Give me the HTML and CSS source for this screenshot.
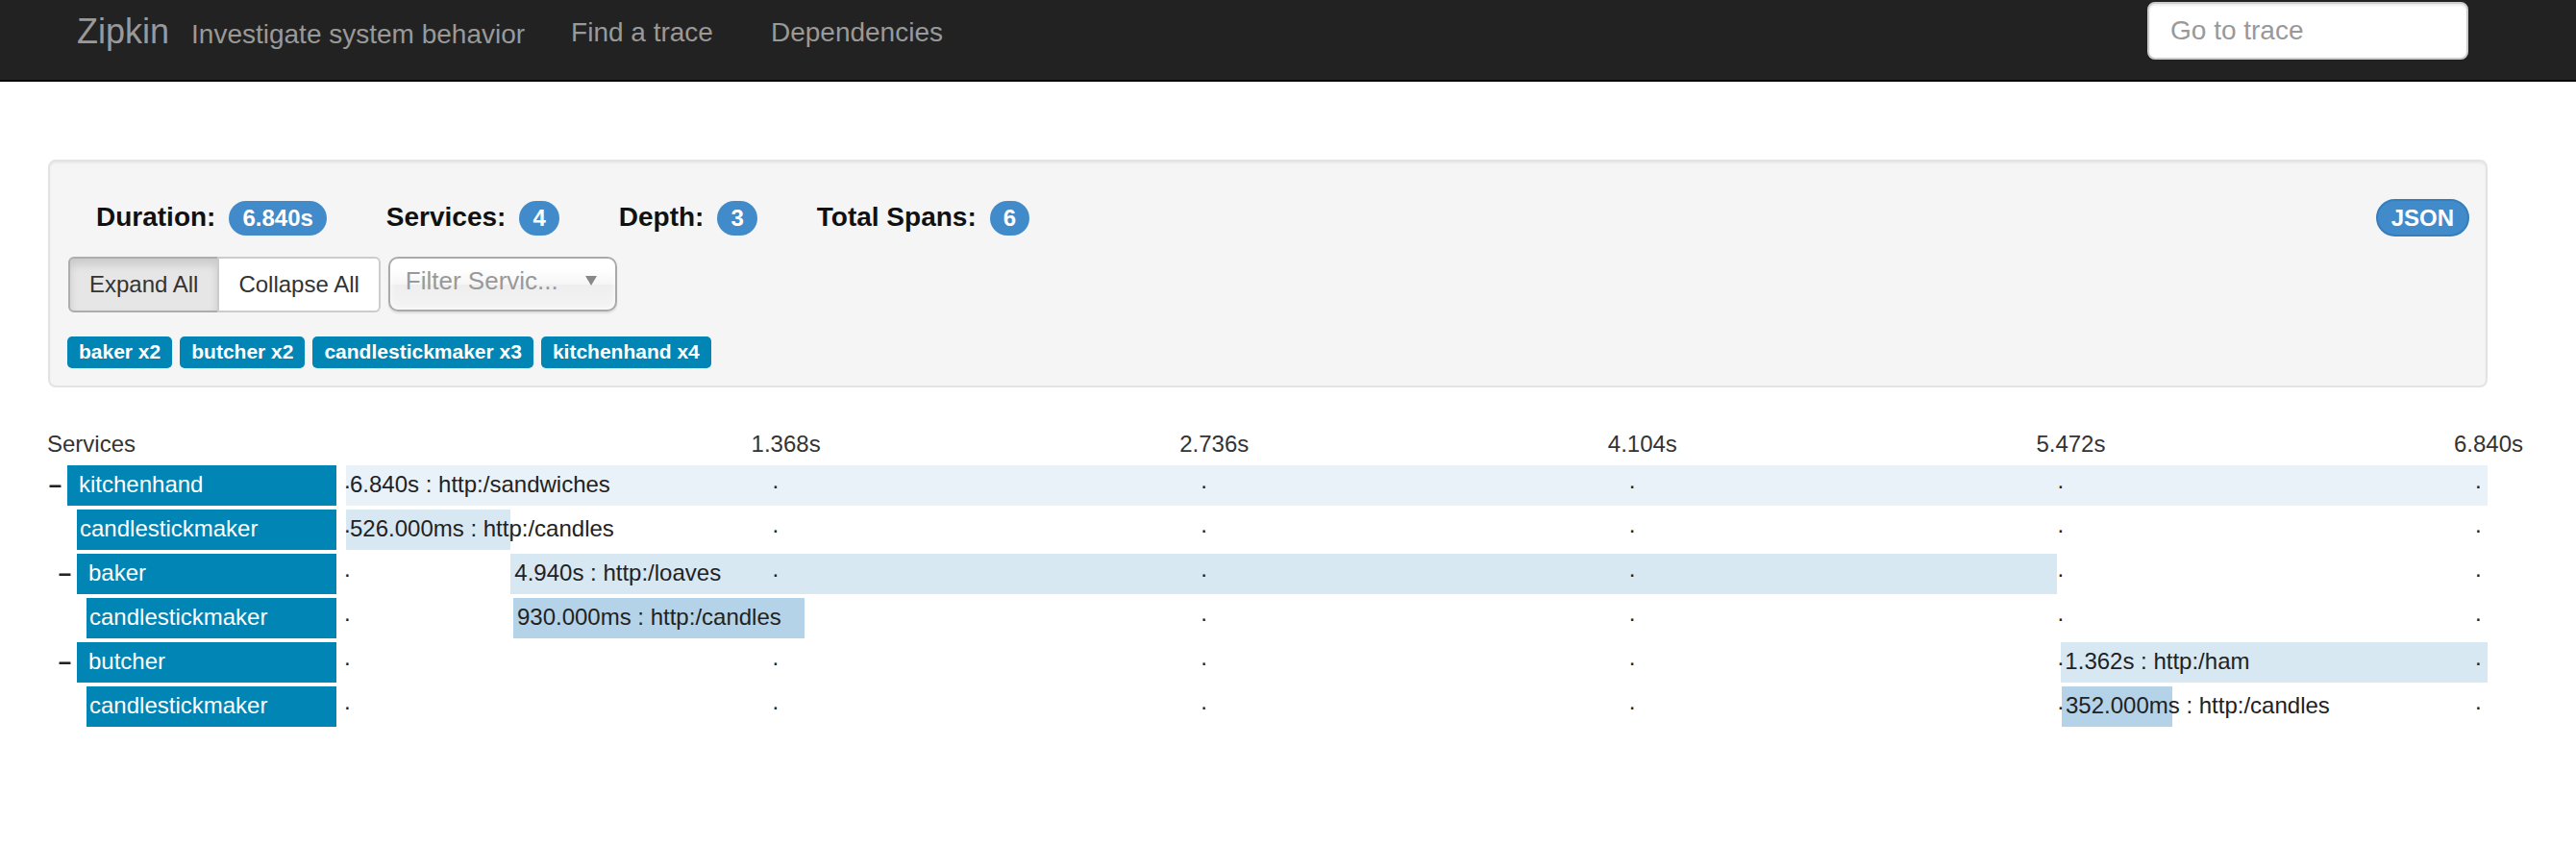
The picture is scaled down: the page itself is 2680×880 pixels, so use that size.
FILE: index.html
```html
<!DOCTYPE html>
<html lang="en">
<head>
<meta charset="utf-8">
<title>Zipkin</title>
<link rel="stylesheet" href="styles.css">
</head>
<body>
<nav class="navbar">
  <a class="brand" href="#">Zipkin</a>
  <span class="tagline">Investigate system behavior</span>
  <ul class="nav">
    <li><a class="nav-link" href="#">Find a trace</a></li>
    <li><a class="nav-link" href="#">Dependencies</a></li>
  </ul>
  <input class="goto" type="text" placeholder="Go to trace">
</nav>

<main class="page">
  <section class="well">
    <div class="stats">
      <div class="stat"><span class="stat-label">Duration:</span><span class="badge">6.840s</span></div>
      <div class="stat"><span class="stat-label">Services:</span><span class="badge">4</span></div>
      <div class="stat"><span class="stat-label">Depth:</span><span class="badge">3</span></div>
      <div class="stat"><span class="stat-label">Total Spans:</span><span class="badge">6</span></div>
      <button class="json" type="button">JSON</button>
    </div>
    <div class="controls">
      <div class="btn-group">
        <button class="btn active" type="button">Expand All</button>
        <button class="btn" type="button">Collapse All</button>
      </div>
      <div class="chosen">
        <span class="placeholder">Filter Servic...</span>
        <span class="arrow"></span>
      </div>
    </div>
    <div class="tags">
      <span class="tag">baker x2</span>
      <span class="tag">butcher x2</span>
      <span class="tag">candlestickmaker x3</span>
      <span class="tag">kitchenhand x4</span>
    </div>
  </section>

  <section class="trace">
    <div class="trace-head">
      <div class="svc-col head-title">Services</div>
      <div class="track">
        <span class="tick-label" style="left:20%">1.368s</span>
        <span class="tick-label" style="left:40%">2.736s</span>
        <span class="tick-label" style="left:60%">4.104s</span>
        <span class="tick-label" style="left:80%">5.472s</span>
        <span class="tick-label end" style="left:100%">6.840s</span>
      </div>
    </div>

    <div class="span-row">
      <div class="svc-col svc-cell d0"><span class="toggle">–</span><span class="svc-name">kitchenhand</span></div>
      <div class="track">
        <div class="bar bar-light" style="left:0%;width:100%">6.840s : http:/sandwiches</div>
        <span class="marker" style="left:0%">.</span>
        <span class="marker" style="left:20%">.</span>
        <span class="marker" style="left:40%">.</span>
        <span class="marker" style="left:60%">.</span>
        <span class="marker" style="left:80%">.</span>
        <span class="marker end" style="left:100%">.</span>
      </div>
    </div>

    <div class="span-row">
      <div class="svc-col svc-cell d1 leaf"><span class="toggle"></span><span class="svc-name">candlestickmaker</span></div>
      <div class="track">
        <div class="bar bar-mid" style="left:0%;width:7.690%">526.000ms : http:/candles</div>
        <span class="marker" style="left:0%">.</span>
        <span class="marker" style="left:20%">.</span>
        <span class="marker" style="left:40%">.</span>
        <span class="marker" style="left:60%">.</span>
        <span class="marker" style="left:80%">.</span>
        <span class="marker end" style="left:100%">.</span>
      </div>
    </div>

    <div class="span-row">
      <div class="svc-col svc-cell d1"><span class="toggle">–</span><span class="svc-name">baker</span></div>
      <div class="track">
        <div class="bar bar-mid" style="left:7.690%;width:72.222%">4.940s : http:/loaves</div>
        <span class="marker" style="left:0%">.</span>
        <span class="marker" style="left:20%">.</span>
        <span class="marker" style="left:40%">.</span>
        <span class="marker" style="left:60%">.</span>
        <span class="marker" style="left:80%">.</span>
        <span class="marker end" style="left:100%">.</span>
      </div>
    </div>

    <div class="span-row">
      <div class="svc-col svc-cell d2 leaf"><span class="toggle"></span><span class="svc-name">candlestickmaker</span></div>
      <div class="track">
        <div class="bar bar-dark" style="left:7.807%;width:13.596%">930.000ms : http:/candles</div>
        <span class="marker" style="left:0%">.</span>
        <span class="marker" style="left:40%">.</span>
        <span class="marker" style="left:60%">.</span>
        <span class="marker" style="left:80%">.</span>
        <span class="marker end" style="left:100%">.</span>
      </div>
    </div>

    <div class="span-row">
      <div class="svc-col svc-cell d1"><span class="toggle">–</span><span class="svc-name">butcher</span></div>
      <div class="track">
        <div class="bar bar-mid" style="left:80.088%;width:19.912%">1.362s : http:/ham</div>
        <span class="marker" style="left:0%">.</span>
        <span class="marker" style="left:20%">.</span>
        <span class="marker" style="left:40%">.</span>
        <span class="marker" style="left:60%">.</span>
        <span class="marker" style="left:80%">.</span>
        <span class="marker end" style="left:100%">.</span>
      </div>
    </div>

    <div class="span-row">
      <div class="svc-col svc-cell d2 leaf"><span class="toggle"></span><span class="svc-name">candlestickmaker</span></div>
      <div class="track">
        <div class="bar bar-dark" style="left:80.117%;width:5.146%">352.000ms : http:/candles</div>
        <span class="marker" style="left:0%">.</span>
        <span class="marker" style="left:20%">.</span>
        <span class="marker" style="left:40%">.</span>
        <span class="marker" style="left:60%">.</span>
        <span class="marker" style="left:80%">.</span>
        <span class="marker end" style="left:100%">.</span>
      </div>
    </div>
  </section>
</main>
</body>
</html>
```

FILE: styles.css
```css
* { box-sizing: border-box; }

html, body {
  margin: 0;
  padding: 0;
  background: #fff;
}

body {
  font-family: "Liberation Sans", Arial, Helvetica, sans-serif;
  font-size: 24px;
  color: #333;
}

/* ---------- navbar ---------- */
.navbar {
  display: flex;
  align-items: flex-start;
  height: 85px;
  background: #222;
  border-bottom: 2px solid #080808;
  padding-left: 80px;
}

.brand {
  font-size: 36px;
  line-height: 40px;
  margin-top: 13px;
  color: #999;
  text-decoration: none;
}

.tagline {
  font-size: 28px;
  line-height: 40px;
  margin: 16px 18px 0 23px;
  color: #999;
  white-space: nowrap;
}

.nav {
  display: flex;
  list-style: none;
  margin: 14px 0 0;
  padding: 0;
}

.nav-link {
  display: block;
  font-size: 28px;
  line-height: 40px;
  padding: 0 30px;
  color: #999;
  text-decoration: none;
  white-space: nowrap;
}

.goto {
  margin: 2px 112px 0 auto;
  width: 334px;
  height: 60px;
  border: 2px solid #ccc;
  border-radius: 8px;
  padding: 0 22px;
  font: 28px "Liberation Sans", Arial, sans-serif;
  color: #555;
  background: #fff;
  box-shadow: inset 0 2px 2px rgba(0, 0, 0, 0.075);
  outline: none;
}

.goto::placeholder { color: #999; }

/* ---------- page ---------- */
.page {
  padding: 81px 92px 0 40px;
}

.well {
  margin-left: 10px;
  background: #f5f5f5;
  border: 2px solid #e3e3e3;
  border-radius: 8px;
  padding: 18px;
  box-shadow: inset 0 2px 2px rgba(0, 0, 0, 0.05);
}

.stats {
  display: flex;
  align-items: baseline;
  margin-top: 20px;
  padding-left: 30px;
}

.stat {
  display: flex;
  align-items: baseline;
  gap: 14px;
  margin-right: 62px;
}

.stat-label {
  font-size: 28px;
  line-height: 40px;
  font-weight: bold;
  color: #111;
  white-space: nowrap;
}

.badge {
  font-size: 24px;
  line-height: 24px;
  font-weight: bold;
  color: #fff;
  background: #428bca;
  border-radius: 20px;
  padding: 6px 14px;
}

.json {
  margin-left: auto;
  margin-right: -1px;
  font: bold 24px/25px "Liberation Sans", Arial, sans-serif;
  color: #fff;
  background: #428bca;
  border: 2px solid #357ebd;
  border-radius: 20px;
  padding: 5px 14px;
}

.controls {
  display: flex;
  margin-top: 21px;
  padding-left: 1px;
}

.btn-group { display: flex; }

.btn {
  font: 24px/36px "Liberation Sans", Arial, sans-serif;
  padding: 9px 20px;
  border: 2px solid #ccc;
  background: #fff;
  color: #333;
  white-space: nowrap;
}

.btn:first-child { border-radius: 6px 0 0 6px; }
.btn:last-child { border-radius: 0 6px 6px 0; margin-left: -2px; }

.btn.active {
  background: #e6e6e6;
  border-color: #adadad;
  box-shadow: inset 0 6px 10px rgba(0, 0, 0, 0.125);
}

.chosen {
  margin-left: 8px;
  width: 238px;
  height: 57px;
  border: 2px solid #aaa;
  border-radius: 10px;
  background: linear-gradient(#fff 20%, #f6f6f6 50%, #eee 52%, #f4f4f4 100%);
  box-shadow: inset 0 0 6px #fff, 0 2px 2px rgba(0, 0, 0, 0.1);
  display: flex;
  align-items: flex-start;
  padding: 5px 19px 0 16px;
}

.placeholder {
  font-size: 26px;
  line-height: 36px;
  color: #999;
  white-space: nowrap;
}

.arrow {
  margin: 13px 0 0 auto;
  width: 0;
  height: 0;
  border-left: 6px solid transparent;
  border-right: 6px solid transparent;
  border-top: 10px solid #888;
}

.tags {
  display: flex;
  gap: 8px;
  margin-top: 25px;
}

.tag {
  font-size: 21px;
  line-height: 21px;
  font-weight: bold;
  color: #fff;
  background: #0085b5;
  border-radius: 5px;
  padding: 5px 12px 7px;
  white-space: nowrap;
}

/* ---------- trace timeline ---------- */
.trace { margin-top: 44px; }

.trace-head {
  display: flex;
  height: 30px;
  line-height: 30px;
  margin-bottom: 7px;
}

.svc-col {
  width: 310px;
  flex: none;
}

.head-title { padding-left: 9px; }

.track {
  position: relative;
  flex: 1;
  margin-left: 10px;
}

.tick-label {
  position: absolute;
  top: 0;
  margin-left: -24px;
  white-space: nowrap;
}

.tick-label.end { margin-left: -35px; }

.span-row {
  display: flex;
  height: 42px;
  margin-bottom: 4px;
}

.svc-cell { display: flex; }
.d1 { padding-left: 10px; }
.d2 { padding-left: 20px; }

.toggle {
  width: 30px;
  flex: none;
  text-align: right;
  padding-right: 6px;
  line-height: 40px;
  font-weight: bold;
  color: #222;
}

.svc-name {
  flex: 1;
  background: #0085b5;
  color: #fff;
  line-height: 40px;
  padding-left: 12px;
  white-space: nowrap;
  overflow: hidden;
}

.leaf .svc-name { padding-left: 3px; }

.bar {
  position: absolute;
  top: 0;
  height: 42px;
  line-height: 40px;
  padding-left: 4px;
  white-space: nowrap;
  color: #222;
}

.bar-light { background: #eaf2f9; }
.bar-mid { background: #d8e8f3; }
.bar-dark { background: #b4d3e8; }

.marker {
  position: absolute;
  top: 0;
  line-height: 31px;
  margin-left: -2px;
  color: #222;
  z-index: 2;
}

.marker.end { margin-left: -13px; }
```
